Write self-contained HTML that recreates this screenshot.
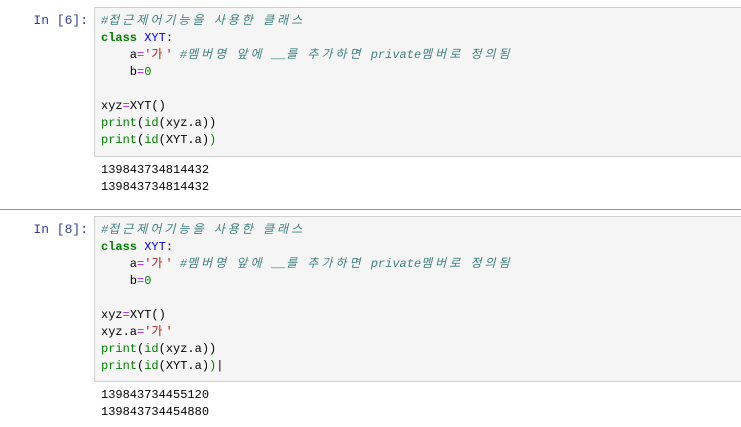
<!DOCTYPE html><html><head><meta charset="utf-8"><style>
body{margin:0;width:741px;height:427px;background:#fff;overflow:hidden;position:relative;font-family:"Liberation Mono","Noto Sans CJK KR",monospace;font-size:12px}
.box{position:absolute;left:94px;right:-2px;background:#f5f5f5;border:1px solid #cfcfcf}
.p{position:absolute;width:88px;text-align:right;color:#303f9f;font-size:13px;line-height:17px}
.c{position:absolute;left:101px;line-height:17px;white-space:pre;color:#000}
.k{color:#008000;font-weight:bold}.n{color:#0000ff}.s{color:#ba2121}.cm{color:#408080;font-style:italic}.o{color:#aa22ff}.g{color:#008000}
.h{letter-spacing:3px}
.out{position:absolute;left:101px;line-height:16.5px;white-space:pre}
</style></head><body>
<div class="box" style="top:7px;height:148px"></div>
<div class="p" style="left:0;top:12px">In [6]:</div>
<div class="c" style="top:13px"><span class="cm">#<span class="h">접근제어기능을</span> <span class="h">사용한</span> <span class="h">클래스</span></span>
<span class="k">class</span> <span class="n">XYT</span>:
    a<span class="o">=</span><span class="s">'<span class="h">가</span>'</span> <span class="cm">#<span class="h">멤버명</span> <span class="h">앞에</span> __<span class="h">를</span> <span class="h">추가하면</span> private<span class="h">멤버로</span> <span class="h">정의됨</span></span>
    b<span class="o">=</span><span class="g">0</span>

xyz<span class="o">=</span>XYT()
<span class="g">print</span>(<span class="g">id</span>(xyz.a))
<span class="g">print</span>(<span class="g">id</span>(XYT.a)<span class="g">)</span></div>
<div class="out" style="top:162px">139843734814432
139843734814432</div>
<div style="position:absolute;left:0;right:0;top:209px;height:1px;background:#5cb85c"></div>
<div class="box" style="top:216px;height:164px"></div>
<div class="p" style="left:0;top:221px">In [8]:</div>
<div class="c" style="top:222px"><span class="cm">#<span class="h">접근제어기능을</span> <span class="h">사용한</span> <span class="h">클래스</span></span>
<span class="k">class</span> <span class="n">XYT</span>:
    a<span class="o">=</span><span class="s">'<span class="h">가</span>'</span> <span class="cm">#<span class="h">멤버명</span> <span class="h">앞에</span> __<span class="h">를</span> <span class="h">추가하면</span> private<span class="h">멤버로</span> <span class="h">정의됨</span></span>
    b<span class="o">=</span><span class="g">0</span>

xyz<span class="o">=</span>XYT()
xyz.a<span class="o">=</span><span class="s">'<span class="h">가</span>'</span>
<span class="g">print</span>(<span class="g">id</span>(xyz.a))
<span class="g">print</span>(<span class="g">id</span>(XYT.a)<span class="g">)</span>|</div>
<div class="out" style="top:387px">139843734455120
139843734454880</div>
</body></html>
